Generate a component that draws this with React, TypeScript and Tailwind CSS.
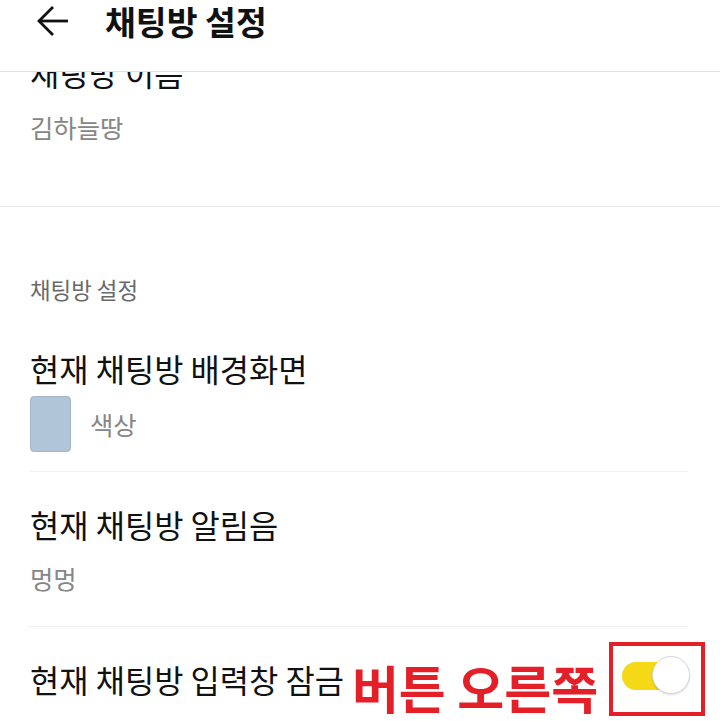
import React from "react";

export default function App() {
  return (
    <div
      className="w-[720px] h-[721px] bg-white overflow-hidden flex flex-col text-[#111]"
      style={{ fontFamily: '"Noto Sans CJK KR", "Noto Sans", sans-serif' }}
    >
      <header className="h-[72px] shrink-0 border-b border-[#e2e2e2]">
        <div className="h-[42px] flex items-center">
          <svg
            className="ml-[37px] shrink-0"
            width="32"
            height="32"
            viewBox="0 0 32 32"
            fill="none"
            stroke="#111"
            strokeWidth="2.8"
            strokeLinecap="butt"
            strokeLinejoin="miter"
          >
            <path d="M31 16H3" />
            <path d="M16 2L2 16L16 30" />
          </svg>
          <h1 className="ml-[36px] text-[33.5px] leading-[42px] font-bold">채팅방 설정</h1>
        </div>
      </header>

      <div className="flex-1 overflow-hidden">
        <div className="-mt-[23px] flex flex-col">
          <div className="px-[30px] text-[31.8px] leading-[46px]">채팅방 이름</div>
          <div className="px-[30px] mt-[15px] text-[25.4px] leading-[34px] text-[#868686]">김하늘땅</div>

          <div className="mt-[62px] h-px bg-[#e6e6e6]" />

          <div className="px-[30px] mt-[67px] text-[22.4px] leading-[30px] text-[#6a6a6a]">채팅방 설정</div>

          <div className="px-[30px] mt-[41px] text-[31.8px] leading-[46px]">현재 채팅방 배경화면</div>
          <div className="px-[30px] mt-[5px] h-[56px] flex items-center">
            <div className="w-[41px] h-[56px] rounded-[4px] bg-[#b1c5d9] border border-[#a3b6ca]" />
            <span className="ml-[19px] text-[25.4px] leading-[34px] text-[#868686]">색상</span>
          </div>

          <div className="ml-[30px] mr-[32px] mt-[19px] h-px bg-[#f1f1f1]" />

          <div className="px-[30px] mt-[29px] text-[31.8px] leading-[46px]">현재 채팅방 알림음</div>
          <div className="px-[30px] mt-[14px] text-[25.4px] leading-[34px] text-[#868686]">멍멍</div>

          <div className="ml-[28px] mr-[32px] mt-[31px] h-px bg-[#f1f1f1]" />

          <div className="h-[94px] flex items-start pl-[30px] pr-[15px]">
            <span className="mt-[29px] text-[31.8px] leading-[46px] whitespace-nowrap">현재 채팅방 입력창 잠금</span>
            <span className="mt-[28px] ml-[8px] text-[51px] leading-[64px] font-bold text-[#e41f28] whitespace-nowrap">
              버튼 오른쪽
            </span>
            <div className="ml-auto mt-[15px] w-[96px] h-[74px] border-[4px] border-[#e41f28] shrink-0">
              <div className="relative ml-[9px] mt-[10px] w-[68px] h-[38px]">
                <div className="absolute left-0 top-[6px] w-[58px] h-[28px] rounded-full bg-[#f5d816]" />
                <div className="absolute right-0 top-0 w-[38px] h-[38px] rounded-full bg-white border border-[#d9d9d9] shadow-[0_1px_2px_rgba(0,0,0,0.15)]" />
              </div>
            </div>
          </div>
        </div>
      </div>
    </div>
  );
}
